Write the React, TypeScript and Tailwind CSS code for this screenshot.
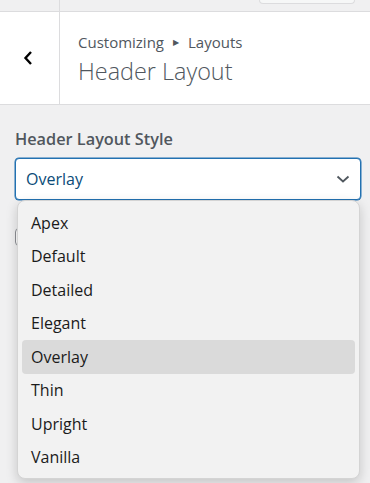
import React from "react";

const items = ["Apex", "Default", "Detailed", "Elegant", "Overlay", "Thin", "Upright", "Vanilla"];

export default function App() {
  return (
    <div
      className="relative w-[370px] h-[483px] overflow-hidden bg-[#f0f0f1]"
      style={{ fontFamily: '"Open Sans", "Noto Sans", sans-serif' }}
    >
      {/* top bar */}
      <div className="flex h-[12px] border-b border-[#dcdcde]">
        <div className="w-[60px] border-r border-[#dcdcde]" />
        <div className="flex-1 flex justify-end pr-[15px]">
          <div className="w-[96px] h-[4px] border-x border-b border-[#dcdcde] rounded-b-[4px] bg-[#f6f7f7]" />
        </div>
      </div>
      {/* header */}
      <div className="flex h-[93px] bg-white border-b border-[#dcdcde]">
        <div className="w-[60px] border-r border-[#dcdcde] flex items-center justify-center">
          <svg width="12" height="16" viewBox="0 0 12 16" className="mr-[3px]">
            <path d="M9 2 L3.5 8 L9 14" fill="none" stroke="#000" strokeWidth="2.4" />
          </svg>
        </div>
        <div className="flex-1 pl-[18px] pt-[18px]">
          <div className="text-[15px] leading-[24px] text-[#50575e] flex items-center">
            <span>Customizing</span>
            <span className="mx-[9px] text-[8px] leading-none">▶</span>
            <span>Layouts</span>
          </div>
          <div className="text-[23.4px] leading-[30px] font-light text-[#50575e] mt-[2px]">Header Layout</div>
        </div>
      </div>
      {/* content */}
      <div className="pl-[15px] pt-[22px]">
        <div className="text-[16.3px] font-semibold leading-[24px] text-[#50575e]">Header Layout Style</div>
        <div className="mt-[7px] w-[346px] h-[42px] border border-[#2271b1] rounded-[4px] bg-white flex items-center justify-between pl-[10px] pr-[10px] shadow-[0_0_0_0.5px_#2271b1]">
          <span className="text-[16px] text-[#0a4b78]">Overlay</span>
          <svg width="14" height="10" viewBox="0 0 14 10">
            <path d="M1.5 2.5 L7 7.5 L12.5 2.5" fill="none" stroke="#50575e" strokeWidth="1.8" />
          </svg>
        </div>
        <div className="mt-[28px] w-[18px] h-[18px] border border-[#8c8f94] rounded-[4px] bg-white" />
      </div>
      {/* dropdown */}
      <div className="absolute left-[17px] top-[200px] w-[343px] h-[279px] rounded-[8px] bg-[#f2f2f2] border border-[#d4d4d4] shadow-[0_4px_12px_rgba(0,0,0,0.18)] px-[4px] pt-[5px]">
        {items.map((it) => (
          <div
            key={it}
            className={`h-[33.5px] flex items-center pl-[9px] rounded-[4px] text-[16px] text-[#1b1b1b] ${it === "Overlay" ? "bg-[#dadada]" : ""}`}
          >
            {it}
          </div>
        ))}
      </div>
    </div>
  );
}
